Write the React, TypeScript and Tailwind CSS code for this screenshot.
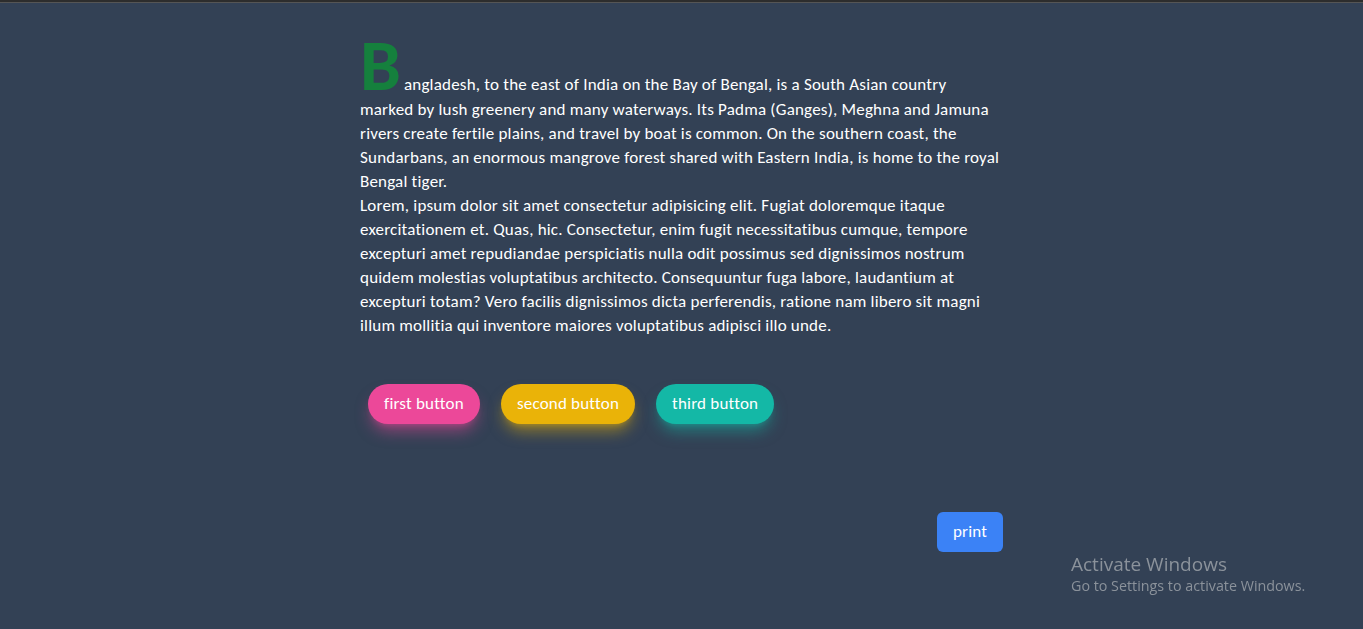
export default function App() {
  return (
    <div className="min-h-screen bg-[#334155] text-white font-['Carlito','Lato',sans-serif] tracking-[0.2px]">
      <div className="h-[3px] bg-[#2d2d2d] border-b border-[#555]" />
      <div className="mx-auto w-[643px] pt-[29px]">
        <p className="text-[17px] leading-6 first-letter:text-[73px] first-letter:font-bold first-letter:text-[#15803d] first-letter:leading-[66px] first-letter:tracking-[3px]">
          Bangladesh, to the east of India on the Bay of Bengal, is a South Asian country marked by lush greenery
          and many waterways. Its Padma (Ganges), Meghna and Jamuna rivers create fertile plains, and travel by boat
          is common. On the southern coast, the Sundarbans, an enormous mangrove forest shared with Eastern India, is
          home to the royal Bengal tiger.
        </p>
        <p className="text-[17px] leading-6">
          Lorem, ipsum dolor sit amet consectetur adipisicing elit. Fugiat doloremque itaque exercitationem et. Quas,
          hic. Consectetur, enim fugit necessitatibus cumque, tempore excepturi amet repudiandae perspiciatis nulla
          odit possimus sed dignissimos nostrum quidem molestias voluptatibus architecto. Consequuntur fuga labore,
          laudantium at excepturi totam? Vero facilis dignissimos dicta perferendis, ratione nam libero sit magni illum
          mollitia qui inventore maiores voluptatibus adipisci illo unde.
        </p>

        <div className="mt-[46px] flex gap-[21px] pl-2 text-[17px]">
          <button className="h-10 rounded-full bg-[#ec4899] px-4 shadow-lg shadow-[#ec4899]/50">first button</button>
          <button className="h-10 rounded-full bg-[#eab308] px-4 shadow-lg shadow-[#eab308]/50">second button</button>
          <button className="h-10 rounded-full bg-[#14b8a6] px-4 shadow-lg shadow-[#14b8a6]/50">third button</button>
        </div>

        <div className="mt-[88px] flex justify-end">
          <button className="h-10 w-[66px] rounded-md bg-[#3b82f6] text-[17px]">print</button>
        </div>
      </div>

      <div className="fixed left-[1071px] top-[552px] text-[#8b929b] font-['Open_Sans',sans-serif] tracking-normal">
        <div className="text-[19px] leading-6">Activate Windows</div>
        <div className="text-[14.3px] leading-5">Go to Settings to activate Windows.</div>
      </div>
    </div>
  );
}
